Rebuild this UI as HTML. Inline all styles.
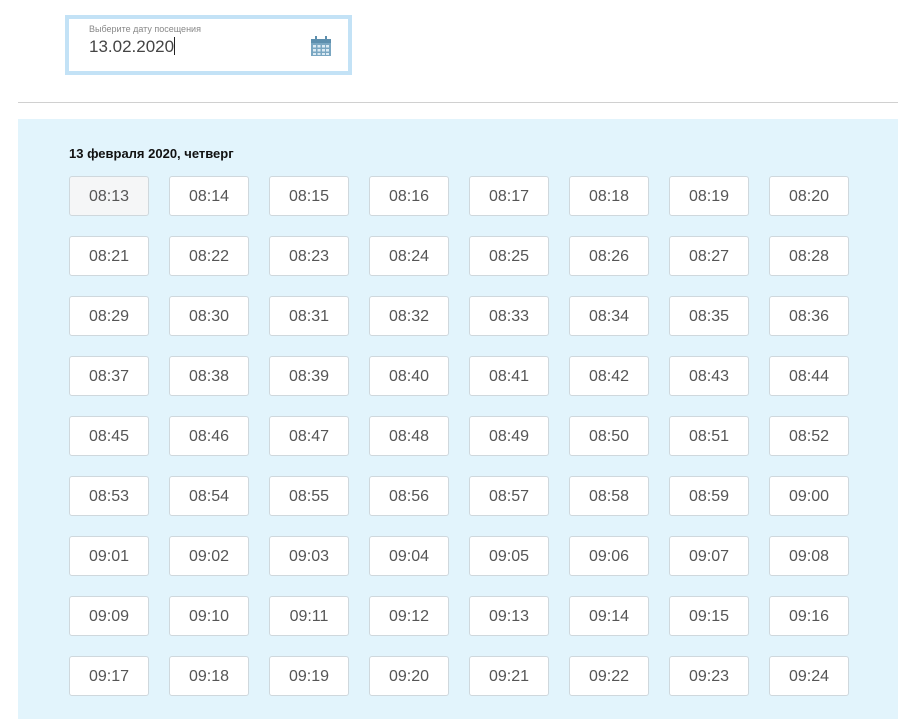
<!DOCTYPE html>
<html><head><meta charset="utf-8"><style>
body{margin:0;width:923px;height:701px;overflow:hidden;background:#fff;font-family:"Liberation Sans",Arial,sans-serif;position:relative}
.inp{position:absolute;left:65px;top:15px;width:279px;height:52px;border:4px solid #c3e2f6;background:#fff}
.lbl{position:absolute;left:20px;top:5px;font-size:9px;color:#888}
.val{position:absolute;left:20px;top:18px;font-size:17px;color:#444}
.cur{display:inline-block;width:1px;height:18px;background:#222;vertical-align:-3px}
.hr{position:absolute;left:18px;top:102px;width:880px;height:1px;background:#d0d0d0}
.panel{position:absolute;left:18px;top:119px;width:880px;height:600px;background:#e2f4fc}
.ttl{position:absolute;left:51px;top:27px;font-size:13px;font-weight:bold;color:#111}
.b{position:absolute;width:78px;height:38px;border:1px solid #cfd8dd;border-radius:3px;background:#fff;color:#555;font-size:16px;text-align:center;line-height:40px}
</style></head><body>
<div class="inp"><div class="lbl">Выберите дату посещения</div><div class="val">13.02.2020<span class="cur"></span></div>
<svg style="position:absolute;left:241px;top:16px" width="22" height="22" viewBox="0 0 22 22"><rect x="1" y="4" width="20" height="17" fill="#7aa7c2"/><rect x="1" y="4" width="20" height="4" fill="#5d8fae"/><rect x="5" y="1" width="2" height="5" fill="#5d8fae"/><rect x="15" y="1" width="2" height="5" fill="#5d8fae"/><g fill="#dbeaf3"><rect x="3" y="10" width="3" height="2.5"/><rect x="7.5" y="10" width="3" height="2.5"/><rect x="12" y="10" width="3" height="2.5"/><rect x="16" y="10" width="3" height="2.5"/><rect x="3" y="14" width="3" height="2.5"/><rect x="7.5" y="14" width="3" height="2.5"/><rect x="12" y="14" width="3" height="2.5"/><rect x="16" y="14" width="3" height="2.5"/><rect x="3" y="18" width="3" height="2"/><rect x="7.5" y="18" width="3" height="2"/><rect x="12" y="18" width="3" height="2"/><rect x="16" y="18" width="3" height="2"/></g></svg>
</div>
<div class="hr"></div>
<div class="panel"><div class="ttl">13 февраля 2020, четверг</div><div id="g"></div></div>
<script>
var h='',m=13,hr=8;for(var r=0;r<9;r++)for(var c=0;c<8;c++){var t=(hr<10?'0':'')+hr+':'+(m<10?'0':'')+m;h+='<div class="b" style="left:'+(51+c*100)+'px;top:'+(57+r*60)+'px'+(r==0&&c==0?';background:#f5f6f7':'')+'">'+t+'</div>';m++;if(m==60){m=0;hr++;}}
document.getElementById('g').innerHTML=h;
</script>
</body></html>
